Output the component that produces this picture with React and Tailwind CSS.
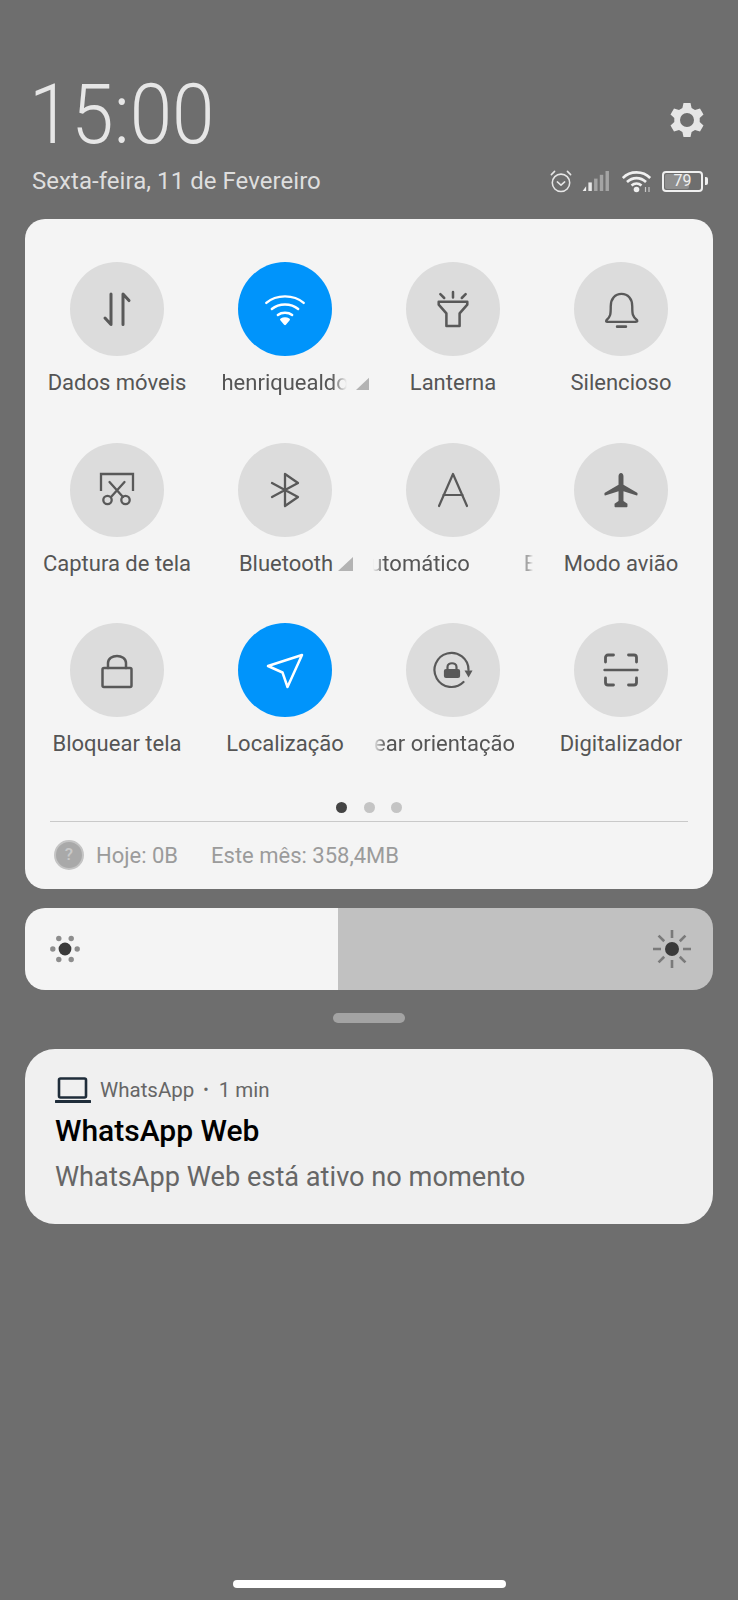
import React from "react";

const S = { fill: "none", stroke: "currentColor", strokeLinecap: "round", strokeLinejoin: "round" };

function Ico({ children, size = 40, sw = 2.2 }) {
  return (
    <svg width={size} height={size} viewBox="0 0 40 40" strokeWidth={sw} {...S}>
      {children}
    </svg>
  );
}

const DataIcon = () => (
  <Ico size={48} sw={2.5}>
    <path d="M15 7.5V33L10 27.5" />
    <path d="M25 33V7.5L30 13" />
  </Ico>
);
const WifiIcon = () => (
  <Ico size={44} sw={2.2}>
    <path d="M3 14.5C12 6.5 28 6.5 37 14.5" />
    <path d="M8 20C14.5 14.5 25.5 14.5 32 20" />
    <path d="M13.5 25.5C17 22.8 23 22.8 26.5 25.5" />
    <path d="M20 33.5L16.6 29.6C18.5 28.4 21.5 28.4 23.4 29.6Z" fill="currentColor" />
  </Ico>
);
const TorchIcon = () => (
  <Ico size={44} sw={2.3}>
    <g transform="translate(0 1.5)">
      <path d="M20 3V8M8.5 5L12 8.5M31.5 5L28 8.5" />
      <path d="M7 12H33V14.5L26 22.5V34H14V22.5L7 14.5Z" />
    </g>
  </Ico>
);
const BellIcon = () => (
  <Ico size={43} sw={2.2}>
    <path d="M6 30C10 26.5 10 24 10 17C10 10 14 5.5 20 5.5C26 5.5 30 10 30 17C30 24 30 26.5 34.5 30C35 31 34.5 31.5 33 31.5H7C5.5 31.5 5.5 31 6 30Z" />
    <path d="M16 36H24" strokeWidth="2.6" />
  </Ico>
);
const ScissorsIcon = () => (
  <Ico sw={2.3}>
    <path d="M4 21V4H36V21" strokeLinecap="butt" strokeLinejoin="miter" />
    <path d="M12.5 12L26 27M27.5 12L14 27" />
    <circle cx="10.5" cy="30" r="4.2" />
    <circle cx="28.5" cy="30" r="4.2" />
  </Ico>
);
const BtIcon = () => (
  <Ico sw={2.3}>
    <path d="M7 13L33 27L20 36V4L33 13L7 27" />
  </Ico>
);
const AIcon = () => (
  <Ico sw={2.2}>
    <path d="M6 36L20 4L34 36" />
    <path d="M10.5 25H29.5" />
  </Ico>
);
const PlaneIcon = () => (
  <svg width="38" height="38" viewBox="0 0 40 40" fill="currentColor">
    <path d="M20 2C21.6 2 22.6 3.6 22.6 5.5V14.5L37 23C37.6 23.4 37.6 24.5 37.2 25.4C36.8 25.8 36.4 25.8 35.8 25.6L22.6 21.2V31.5L26.8 34.6V37.4C26.8 38 26.2 38.2 25.6 38.2H14.4C13.8 38.2 13.2 38 13.2 37.4V34.6L17.4 31.5V21.2L4.2 25.6C3.6 25.8 3.2 25.8 2.8 25.4C2.4 24.5 2.4 23.4 3 23L17.4 14.5V5.5C17.4 3.6 18.4 2 20 2Z" />
  </svg>
);
const LockIcon = () => (
  <Ico sw={2.5}>
    <path d="M11 18V13C11 3.5 29 3.5 29 13V18" />
    <rect x="5.5" y="18" width="29" height="19" rx="1.5" />
  </Ico>
);
const NavIcon = () => (
  <Ico sw={2.5}>
    <path d="M37 5L22.5 37L17.5 22.5L3 16Z" />
  </Ico>
);
const RotLockIcon = () => (
  <Ico sw={2.2}>
    <path d="M30.5 32A17 17 0 1 1 35.5 20" />
    <path d="M31.5 20.5H39.5L35.6 27.5Z" fill="currentColor" stroke="none" />
    <path d="M14.5 20V17C14.5 12 23.5 12 23.5 17V20" />
    <rect x="12" y="20" width="14" height="7" rx="1" fill="currentColor" />
  </Ico>
);
const ScanIcon = () => (
  <Ico sw={2.8}>
    <path d="M12.5 5H7A2.5 2.5 0 0 0 4.5 7.5V12" />
    <path d="M27.5 5H33A2.5 2.5 0 0 1 35.5 7.5V12" />
    <path d="M12.5 35H7A2.5 2.5 0 0 1 4.5 32.5V28" />
    <path d="M27.5 35H33A2.5 2.5 0 0 0 35.5 32.5V28" />
    <path d="M3.5 20H36.5" strokeWidth="2.4" />
  </Ico>
);

const Tri = () => (
  <svg width="15" height="14" viewBox="0 0 15 14" className="shrink-0 text-[#b3b3b3]">
    <path d="M15 0V14H0Z" fill="currentColor" />
  </svg>
);

function Tile({ icon, active, children }) {
  return (
    <div className="flex flex-col items-center">
      <div
        className={`flex h-[94px] w-[94px] items-center justify-center rounded-full ${
          active ? "bg-[#0094fb] text-white" : "bg-[#dcdcdc] text-[#595959]"
        }`}
      >
        {icon}
      </div>
      <div className="mt-[13px] flex h-[28px] w-full items-center justify-center overflow-hidden whitespace-nowrap px-1 text-[22px] leading-[28px] text-[#555555]">
        {children}
      </div>
    </div>
  );
}

function SunSmall() {
  const dots = [[-6.2, -10.5], [6.2, -10.5], [-12.2, 0], [12.2, 0], [-6.2, 10.5], [6.2, 10.5]];
  return (
    <svg width="32" height="32" viewBox="-16 -16 32 32">
      {dots.map(([x, y]) => (
        <circle key={`${x}${y}`} cx={x} cy={y} r="2.7" fill="#8d8d8d" />
      ))}
      <circle cx="0" cy="0" r="6.4" fill="#3a3a3a" />
    </svg>
  );
}

function SunBig() {
  const a = [0, 45, 90, 135, 180, 225, 270, 315];
  return (
    <svg width="40" height="40" viewBox="-20 -20 40 40">
      {a.map((d) => (
        <path key={d} d="M0 -19V-11" stroke="#7a7a7a" strokeWidth="2.6" transform={`rotate(${d})`} />
      ))}
      <circle cx="0" cy="0" r="7" fill="#3a3a3a" />
    </svg>
  );
}

export default function App() {
  return (
    <div
      className="flex h-[1600px] w-[738px] flex-col overflow-hidden bg-[#6e6e6e]"
      style={{ fontFamily: "Roboto, 'Noto Sans', sans-serif" }}
    >
      <header className="h-[219px] pl-[32px] pr-[30px] pt-[66px] text-[#e6e6e6]">
        <div className="flex h-[98px] items-center justify-between">
          <div className="ml-[-3px] origin-left scale-x-[0.92] text-[83px] font-light leading-[98px]">15:00</div>
          <svg width="36" height="36" viewBox="0 0 36 36" className="mr-[3px] mt-[10px]">
            <path
              fill="currentColor"
              fillRule="evenodd"
              d="M14.5 1H21.5L22.6 6L26 8L31 6.4L34.5 12.5L30.7 16V20L34.5 23.5L31 29.6L26 28L22.6 30L21.5 35H14.5L13.4 30L10 28L5 29.6L1.5 23.5L5.3 20V16L1.5 12.5L5 6.4L10 8L13.4 6ZM18 11A7 7 0 1 0 18 25A7 7 0 1 0 18 11Z"
            />
          </svg>
        </div>
        <div className="mt-[2px] flex h-[30px] items-center justify-between">
          <div className="text-[24px] leading-[30px] tracking-[0.05px] text-[#dedede]">Sexta-feira, 11 de Fevereiro</div>
          <div className="flex items-center">
            <svg width="22" height="24" viewBox="0 0 24 26" fill="none" stroke="currentColor" strokeWidth="1.7" strokeLinecap="round" strokeLinejoin="round">
              <circle cx="12" cy="15" r="9.5" />
              <path d="M8 14L12 17.5L16 14" />
              <path d="M1.5 6L5 2.5M22.5 6L19 2.5" />
            </svg>
            <svg width="28" height="20" viewBox="0 0 28 21" className="ml-[10px]">
              <path d="M0 21L3.6 16V21Z" fill="#f0f0f0" />
              <rect x="6" y="12" width="3.6" height="9" fill="#e8e8e8" />
              <rect x="12" y="8" width="3.6" height="13" fill="#a4a4a4" />
              <rect x="18" y="4" width="3.6" height="17" fill="#a4a4a4" />
              <rect x="24" y="0" width="3.6" height="21" fill="#a4a4a4" />
            </svg>
            <svg width="30" height="23" viewBox="0 0 30 23" className="ml-[12px]" fill="none" stroke="#f0f0f0" strokeWidth="2.6">
              <path d="M0.8 8C8 0.5 21 0.5 28.2 8" />
              <path d="M5 12C10.5 6.8 18.5 6.8 24 12" />
              <path d="M9.5 15.5C12.5 13 16.5 13 19.5 15.5" />
              <circle cx="14.5" cy="19.5" r="2.8" fill="#f0f0f0" stroke="none" />
              <path d="M23.5 17V22M27 17V22" strokeWidth="1.2" stroke="#c8c8c8" />
            </svg>
            <div className="ml-[10px] flex items-center">
              <div className="relative flex h-[21px] w-[41px] items-center justify-center rounded-[4px] border-2 border-[#f0f0f0] text-[16px] leading-none text-[#f0f0f0]">
                <div className="absolute bottom-[1px] left-[1px] top-[1px] w-[24px] rounded-[2px] bg-[#8e8e8e]" />
                <span className="relative">79</span>
              </div>
              <div className="ml-[2px] h-[8px] w-[3px] rounded-r-[2px] bg-[#f0f0f0]" />
            </div>
          </div>
        </div>
      </header>

      <section className="mx-[25px] flex h-[670px] flex-col rounded-[20px] bg-[#f4f4f4] px-[8px] pt-[43px]">
        <div className="grid grid-cols-4 gap-y-[45.5px]">
          <Tile icon={<DataIcon />}>Dados móveis</Tile>
          <Tile icon={<WifiIcon />} active>
            <span className="ml-[22px] w-[125px] shrink-0 overflow-hidden [mask-image:linear-gradient(to_right,black_88%,transparent)]">henriquealdo</span>
            <span className="ml-[9px] shrink-0"><Tri /></span>
          </Tile>
          <Tile icon={<TorchIcon />}>Lanterna</Tile>
          <Tile icon={<BellIcon />}>Silencioso</Tile>
          <Tile icon={<ScissorsIcon />}>Captura de tela</Tile>
          <Tile icon={<BtIcon />}>
            <span className="ml-[22px]">Bluetooth</span>
            <span className="ml-[5px]"><Tri /></span>
          </Tile>
          <Tile icon={<AIcon />}>
            <span className="block w-[160px] overflow-hidden [mask-image:linear-gradient(to_right,transparent,black_7%,black_97%,transparent)]">
              <span className="ml-[-17px] inline-block">Automático</span>
              <span className="ml-[54px] inline-block opacity-50">E</span>
            </span>
          </Tile>
          <Tile icon={<PlaneIcon />}>Modo avião</Tile>
          <Tile icon={<LockIcon />}>Bloquear tela</Tile>
          <Tile icon={<NavIcon />} active>Localização</Tile>
          <Tile icon={<RotLockIcon />}>
            <span className="flex w-[160px] justify-end overflow-hidden pr-[18px] [mask-image:linear-gradient(to_right,transparent,black_8%)]">
              Bloquear orientação
            </span>
          </Tile>
          <Tile icon={<ScanIcon />}>Digitalizador</Tile>
        </div>

        <div className="mt-[44px] flex h-[11px] items-center justify-center gap-[16.5px]">
          <span className="h-[11px] w-[11px] rounded-full bg-[#444444]" />
          <span className="h-[11px] w-[11px] rounded-full bg-[#c4c4c4]" />
          <span className="h-[11px] w-[11px] rounded-full bg-[#c4c4c4]" />
        </div>
        <div className="mx-[17px] mt-[8px] h-[1px] bg-[#c9c9c9]" />
        <div className="mx-[17px] mt-[18px] flex h-[30px] items-center text-[22px] text-[#9b9b9b]">
          <div className="ml-[4px] flex h-[30px] w-[30px] items-center justify-center rounded-full border-2 border-[#c4c4c4] bg-[#a9a9a9] text-[17px] font-medium text-[#c9c9c9]">
            ?
          </div>
          <span className="ml-[12px]">Hoje: 0B</span>
          <span className="ml-[33px]">Este mês: 358,4MB</span>
        </div>
      </section>

      <section className="mx-[25px] mt-[19px] flex h-[82px] overflow-hidden rounded-[20px]">
        <div className="flex w-[313px] items-center bg-[#f4f4f4] pl-[24px]">
          <SunSmall />
        </div>
        <div className="flex flex-1 items-center justify-end bg-[#c1c1c1] pr-[21px]">
          <SunBig />
        </div>
      </section>

      <div className="mx-auto mt-[23px] h-[10px] w-[72px] rounded-[5px] bg-[#a3a3a3]" />

      <section className="mx-[25px] mt-[26px] h-[175px] rounded-[30px] bg-[#f0f0f0] pl-[30px] pt-[27px]">
        <div className="flex h-[28px] items-center text-[20.5px] text-[#666666]">
          <svg width="36" height="26" viewBox="0 0 36 26" fill="none" stroke="#1f2d3a" strokeWidth="2.6">
            <rect x="4" y="1.5" width="27" height="19" rx="1.5" />
            <path d="M1 24.5H35" strokeWidth="3" strokeLinecap="round" />
          </svg>
          <span className="ml-[9px]">WhatsApp</span>
          <span className="ml-[9px] text-[16px]">•</span>
          <span className="ml-[10px]">1 min</span>
        </div>
        <div className="mt-[9px] h-[36px] text-[30px] font-medium leading-[36px] text-black">WhatsApp Web</div>
        <div className="mt-[10px] h-[36px] text-[27.2px] leading-[36px] text-[#666666]">WhatsApp Web está ativo no momento</div>
      </section>

      <div className="mx-auto mt-[356px] h-[8px] w-[273px] rounded-full bg-white" />
    </div>
  );
}
